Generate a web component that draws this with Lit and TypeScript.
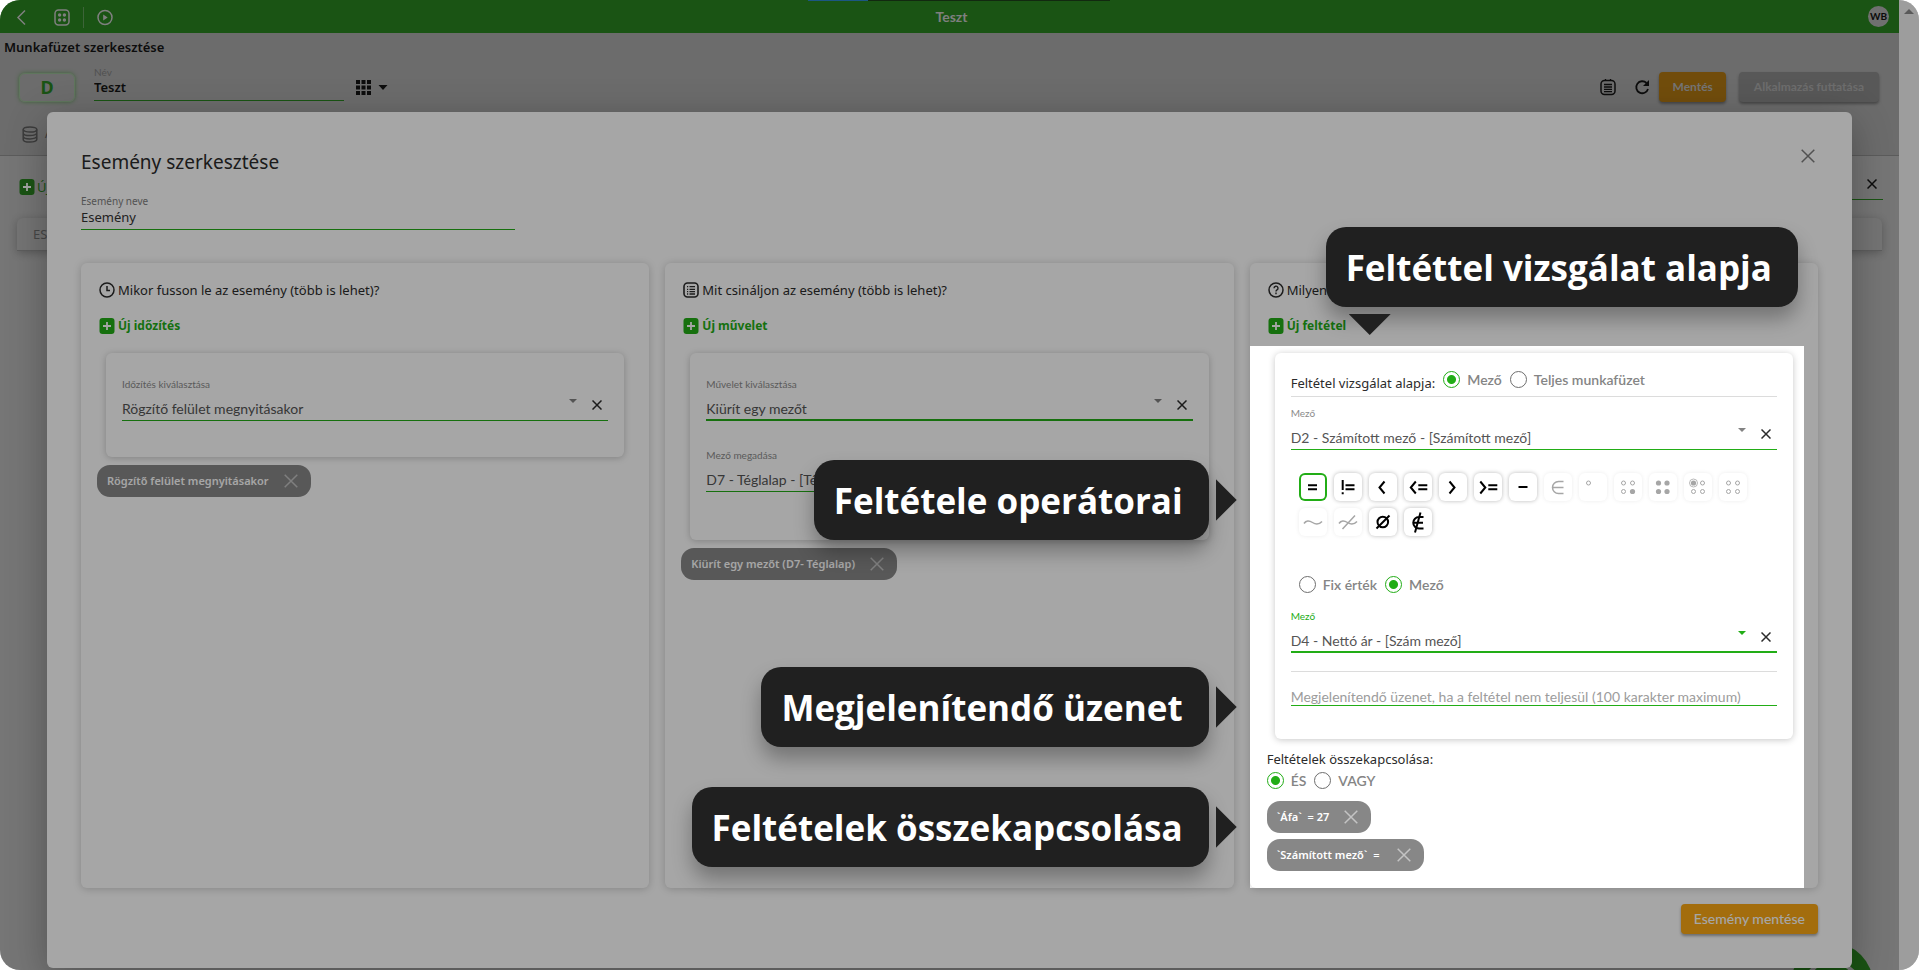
import { LitElement, html, svg, css, TemplateResult, SVGTemplateResult } from "lit";
import { customElement } from "lit/decorators.js";
import { classMap } from "lit/directives/class-map.js";

type Operator = { name: string; glyph: SVGTemplateResult; state?: "active" | "off" };

const ring = (x: number, y: number) =>
  svg`<circle cx=${x} cy=${y} r="2" fill="none" stroke="currentColor" stroke-width="1"/>`;
const dot = (x: number, y: number) => svg`<circle cx=${x} cy=${y} r="2.6" fill="currentColor"/>`;
const stroke = (d: string, width = 2) =>
  svg`<path d=${d} fill="none" stroke="currentColor" stroke-width=${width}/>`;

const OPERATORS: Operator[] = [
  { name: "egyenlő", glyph: stroke("M9 12.2h9M9 16.2h9"), state: "active" },
  { name: "nem egyenlő", glyph: stroke("M8.7 7v10M8.7 19.3v2M11.5 12.2h9M11.5 16.2h9") },
  { name: "kisebb", glyph: stroke("M15.5 8.5l-5 6 5 6") },
  { name: "kisebb vagy egyenlő", glyph: stroke("M11.8 8.5l-5 6 5 6M14.3 12.2h9M14.3 16.2h9") },
  { name: "nagyobb", glyph: stroke("M10.5 8.5l5 6-5 6") },
  { name: "nagyobb vagy egyenlő", glyph: stroke("M6.3 8.5l5 6-5 6M14.3 12.2h9M14.3 16.2h9") },
  { name: "között", glyph: stroke("M9.5 14h9") },
  { name: "eleme", glyph: stroke("M19.5 8.5h-5a5.8 5.8 0 0 0 0 12h5M9 14.5h10.5", 1.5), state: "off" },
  { name: "egy", glyph: ring(9.5, 10), state: "off" },
  { name: "utolsó", glyph: svg`${ring(9.5, 10)}${ring(18.5, 10)}${ring(9.5, 18.5)}${dot(18.5, 18.5)}`, state: "off" },
  { name: "mind", glyph: svg`${dot(9.5, 10)}${dot(18, 10)}${dot(9.5, 18.5)}${dot(18, 18.5)}`, state: "off" },
  {
    name: "első",
    glyph: svg`${dot(9.5, 10)}<circle cx="9.5" cy="10" r="4" fill="none" stroke="currentColor" stroke-width=".8"/>${ring(18.5, 10)}${ring(9.5, 18.5)}${ring(18.5, 18.5)}`,
    state: "off",
  },
  { name: "egyik sem", glyph: svg`${ring(9.5, 10)}${ring(18.5, 10)}${ring(9.5, 18.5)}${ring(18.5, 18.5)}`, state: "off" },
  { name: "hasonló", glyph: stroke("M5 15.5c2-3.2 5-3.4 8.5-1s6.5 2.2 9.5-1", 1.5), state: "off" },
  {
    name: "nem hasonló",
    glyph: stroke("M5 15.5c2-3.2 5-3.4 8.5-1s6.5 2.2 9.5-1M8.5 21L21 7.5", 1.5),
    state: "off",
  },
  {
    name: "üres",
    glyph: svg`<circle cx="13.8" cy="14" r="5.3" fill="none" stroke="currentColor" stroke-width="2"/>${stroke("M7.5 20.5L20.5 7.5")}`,
  },
  { name: "nem eleme", glyph: stroke("M19.5 9h-4.5a5.6 5.6 0 0 0 0 11.5h4.5M10 14.7h9M11 24.5L16.5 4.5") },
];

const plusIcon = html`<svg width="16" height="16" viewBox="0 0 16 16" aria-hidden="true">
  <rect x=".5" y="0" width="15" height="16" rx="3" fill="currentColor" />
  <path d="M8 4v8M4 8h8" stroke="#fff" stroke-width="1.8" />
</svg>`;
const clockIcon = html`<svg width="16" height="16" viewBox="0 0 16 16" fill="none" stroke="currentColor" aria-hidden="true">
  <circle cx="8" cy="8" r="7" stroke-width="1.5" />
  <path d="M8 4v4.5h3" stroke-width="1.5" />
</svg>`;
const listIcon = html`<svg width="16" height="16" viewBox="0 0 16 16" fill="none" stroke="currentColor" aria-hidden="true">
  <rect x="1" y="1" width="14" height="14" rx="3.5" stroke-width="1.6" />
  <path d="M4 4.7h1.2M4 7.3h1.2M4 9.7h1.2M4 12h1.2M6.5 4.7h5.5M6.5 7.3h5.5M6.5 9.7h5.5M6.5 12h5.5" stroke-width="1.3" />
</svg>`;
const questionIcon = html`<svg width="16" height="16" viewBox="0 0 16 16" fill="none" stroke="currentColor" aria-hidden="true">
  <circle cx="8" cy="8" r="7" stroke-width="1.5" />
  <path d="M6 6.2a2 2 0 1 1 3 1.7c-.7.4-1 .8-1 1.6M8 10.6v1.6" stroke-width="1.4" />
</svg>`;
const cross = (size: number, width: number) => html`<svg
  width=${size} height=${size} viewBox="0 0 10 10" aria-hidden="true"
><path d="M.5.5l9 9M9.5.5l-9 9" fill="none" stroke="currentColor" stroke-width=${(width * 10) / size} /></svg>`;

@customElement("app-root")
export class AppRoot extends LitElement {
  static styles = css`
    :host {
      --green: #22ad16;
      --ui: "Noto Sans", "Open Sans", sans-serif;
      --round: Lato, "Open Sans", sans-serif;
      display: block;
      background: #fff;
      font-family: var(--ui);
      font-size: 13px;
      line-height: 20px;
      color: #2b2b2b;
    }
    * { box-sizing: border-box; }
    svg { display: block; flex: none; }
    button {
      display: flex; align-items: center; justify-content: center;
      margin: 0; padding: 0; border: 0; background: none;
      font: inherit; color: inherit; cursor: pointer;
    }
    h1, h2, h3, p { margin: 0; font: inherit; }
    .screen {
      position: relative;
      display: flex;
      min-height: 100vh;
      border-radius: 20px;
      overflow: hidden;
      background: #b5b5b5;
    }
    .page { flex: 1; min-width: 0; position: relative; display: flex; flex-direction: column; }
    .scroll { width: 20px; background: #f1f1f1; color: #8a8a8a; display: flex; justify-content: center; padding-top: 9px; }

    .bar {
      height: 33px; background: #28811f; color: #c4c4c4;
      display: grid; grid-template-columns: 1fr auto 1fr; align-items: center;
      padding: 0 10px 0 14px;
      font-family: var(--round); font-weight: 700; font-size: 14px;
    }
    .bar-left { display: flex; align-items: center; padding-top: 2px; }
    .bar-left button { width: 16px; height: 17px; }
    .bar-left .apps { margin-left: 24px; }
    .rule { width: 1px; height: 21px; margin: 0 13px; background: #5f9a58; }
    .avatar {
      justify-self: end; width: 21px; height: 21px; border-radius: 50%;
      background: #adadad; color: #111; font-size: 10px; line-height: 21px; text-align: center;
    }
    .progress { position: absolute; top: 0; left: 808px; width: 302px; height: 1px; background: linear-gradient(90deg, #2b86c9 20%, #1c3f1a 20%); }

    .head { background: #a6a6a6; border-bottom: 1px solid #8d8d8d; height: 123px; color: #141414; }
    .head h1 { padding: 4px 4px 0; font-size: 13px; line-height: 20px; font-weight: 600; }
    .tools { display: flex; align-items: center; padding: 15px 20px 0 19px; }
    .letter {
      width: 56px; height: 29px; border-radius: 6px; border: 1px solid #93b58f; box-shadow: 0 0 4px #5f9a58;
      color: #28811f; font-size: 18px; font-weight: 700; line-height: 27px; text-align: center;
    }
    .name { width: 250px; height: 36px; margin: -8px 12px 0 19px; display: flex; flex-direction: column; border-bottom: 1px solid #28811f; }
    .name label { font: 10px/14px var(--round); color: #7c7c7c; }
    .name input { height: 16px; font-size: 13px; font-weight: 600; color: #141414; }
    .grid { gap: 7px; }
    .tools .right { margin-left: auto; display: flex; align-items: center; }
    .btn {
      height: 30px; border-radius: 4px; padding: 0 13px; background: #faa814; color: #fff;
      box-shadow: 0 2px 3px rgba(0, 0, 0, .35); white-space: nowrap;
    }
    .tools .btn { background: #ae7612; color: #b3b3b3; font: 700 12px/16px var(--round); }
    .tools .btn.off { background: #878787; color: #a8a8a8; margin-left: 13px; padding: 0 15px; }
    .tab { display: flex; gap: 7px; padding: 24px 22px 0; color: #5c5c5c; font-size: 12px; line-height: 16px; }
    .subhead { display: flex; align-items: center; margin-top: 18px; height: 26px; padding: 0 16px 0 19px; color: #28811f; gap: 2px; }
    .search { margin-left: auto; width: 250px; height: 26px; border-bottom: 1px solid #28811f; color: #141414; display: flex; justify-content: flex-end; align-items: flex-start; padding: 5px 6px 0 0; }
    .thead { margin: 18px 17px 0; height: 33px; border-radius: 6px 6px 0 0; border-bottom: 1px solid #8f8f8f; background: #b3b3b3; color: #6d6d6d; padding: 6px 16px; box-shadow: 0 2px 8px rgba(0, 0, 0, .25); }
    .fab { position: absolute; right: 26px; bottom: -55px; }

    input, select { font-family: inherit; margin: 0; padding: 0; border: 0; outline: 0; background: none; border-radius: 0; min-width: 0; }

    .modal {
      position: absolute; inset: 112px 47px 2px 47px;
      display: flex; flex-direction: column;
      padding: 0 34px 34px;
      background: #fff; border-radius: 6px;
      box-shadow: 0 10px 40px rgba(0, 0, 0, .3);
    }
    .modal-head { display: flex; align-items: flex-start; justify-content: space-between; padding-top: 36px; }
    .modal-head h2 { font-size: 19px; line-height: 28px; }
    .modal-head button { width: 16px; height: 16px; margin-right: 2px; color: #7d7d7d; }
    .event { width: 434px; height: 36px; margin-top: 18px; display: flex; flex-direction: column; border-bottom: 1px solid var(--green); }
    .event label { font-size: 10px; line-height: 14px; color: #808080; }
    .event input { height: 17px; font-size: 13px; color: #333; }
    .columns { flex: 1; display: grid; grid-template-columns: repeat(3, minmax(0, 1fr)); gap: 16px; margin-top: 33px; }
    .column { position: relative; border-radius: 6px; box-shadow: 0 1px 8px rgba(0, 0, 0, .2); padding: 17px 16px 0; }
    .question, .add { display: flex; align-items: center; gap: 3px; padding-left: 2px; height: 20px; white-space: nowrap; }
    .add { margin-top: 16px; color: var(--green); font-weight: 700; font-size: 12px; }
    .card { margin: 17px 9px 8px; padding: 24px 16px 36px; border-radius: 6px; box-shadow: 0 1px 7px rgba(0, 0, 0, .22); }
    .card.tall { padding-bottom: 48px; }
    .card.rules { padding: 15px 16px 33px; margin-bottom: 10px; }

    .field { font-family: var(--round); }
    .field label { display: block; font-size: 10px; line-height: 14px; color: #8c8c8c; }
    .field .line { display: flex; align-items: center; height: 28px; margin-top: 2px; border-bottom: 1px solid var(--green); }
    .field.thick .line { border-bottom-width: 2px; }
    .field select { appearance: none; flex: 1; height: 24px; margin-top: 4px; font-size: 14px; color: #555; text-overflow: ellipsis; }
    .caret { align-self: flex-start; color: #828282; pointer-events: none; }
    .field .clear { width: 20px; height: 24px; align-self: flex-start; margin: 0 1px 0 6px; color: #2b2b2b; }
    .field.focus label, .field.focus .caret { color: var(--green); }
    .field + .field { margin-top: 27px; }

    .chip {
      display: flex; align-items: center; width: fit-content; height: 32px; padding: 0 13px 0 10px; gap: 15px;
      border-radius: 13px; background: #878787; color: #fff; font-size: 11px; font-weight: 600; white-space: pre;
    }
    .chip button { color: #c4c4c4; }
    .chip + .chip { margin-top: 6px; }

    .radios { display: flex; align-items: center; font: 600 14px/17px var(--round); color: #858585; }
    .radios label { padding-left: 7px; }
    .radios input {
      appearance: none; width: 17px; height: 17px; border: 1px solid #6e6e6e; border-radius: 50%;
    }
    .radios label + input { margin-left: 8px; }
    .radios input:checked { border-color: var(--green); background: radial-gradient(circle, var(--green) 4px, transparent 5px); }
    .basis { display: flex; align-items: center; gap: 8px; height: 29px; border-bottom: 1px solid #dcdcdc; margin-bottom: 9px; white-space: nowrap; }
    .basis span { padding-top: 2px; }
    .basis .radios { padding-bottom: 5px; }
    .ops { display: flex; flex-wrap: wrap; gap: 7px; margin: 23px 0 40px 8px; }
    .ops button { width: 28px; height: 28px; border-radius: 6px; color: #000; box-shadow: 0 0 4px rgba(0, 0, 0, .28); }
    .ops .active { box-shadow: inset 0 0 0 2px var(--green); }
    .ops .off { color: #a6a6a6; box-shadow: 0 0 4px rgba(0, 0, 0, .08); }
    .source { margin: 0 0 16px 8px; }
    .message { margin-top: 18px; border-top: 1px solid #dcdcdc; padding-top: 16px; }
    .message input { display: block; width: 100%; height: 18px; border-bottom: 1px solid var(--green); font: 14px/17px var(--round); color: #333; }
    .message input::placeholder { color: #9c9c9c; opacity: 1; }
    .join { padding-left: 1px; }
    .joiners { margin: 3px 0 12px 1px; }
    .rules-chips { margin-left: 1px; }
    .save { margin: 16px 0 0 auto; font: 500 14px/20px var(--round); }

    .spot { position: absolute; inset: 83px 14px 0 0; z-index: 1; pointer-events: none; box-shadow: 0 0 0 3000px rgba(0, 0, 0, .35); }
    .callout {
      position: absolute; z-index: 2; height: 80px; padding: 0 26px 0 20px; border-radius: 20px;
      background: #202020; color: #fff; font: 700 35px/82px "Open Sans", sans-serif; white-space: nowrap;
      box-shadow: 0 12px 20px rgba(0, 0, 0, .3);
    }
    .callout::after { content: ""; position: absolute; background: #202020; }
    .callout.left { right: calc(100% + 41px); }
    .callout.left::after { left: calc(100% + 7px); top: 19px; width: 21px; height: 42px; clip-path: polygon(0 0, 100% 50%, 0 100%); }
    .callout.above { left: 76px; top: -36px; }
    .callout.above::after { left: 23px; top: 87px; width: 42px; height: 21px; clip-path: polygon(0 0, 100% 0, 50% 100%); }
    .at-ops { top: 197px; }
    .at-message { top: 404px; }
    .at-join { top: 524px; }
  `;

  private select(id: string, label: string, value: string, kind = ""): TemplateResult {
    return html`<div class="field ${kind}">
      <label for=${id}>${label}</label>
      <div class="line">
        <select id=${id}><option>${value}</option></select>
        <svg class="caret" width="16" height="16" viewBox="0 0 16 16" aria-hidden="true"><path d="M4 6h8l-4 4z" fill="currentColor" /></svg>
        <button class="clear" aria-label="Törlés">${cross(10, 1.5)}</button>
      </div>
    </div>`;
  }

  private chip(text: string): TemplateResult {
    return html`<div class="chip"><span>${text}</span><button aria-label="Eltávolítás">${cross(14, 1.5)}</button></div>`;
  }

  private radios(name: string, options: string[], checked: number, kind = ""): TemplateResult {
    return html`<div class="radios ${kind}" role="radiogroup">
      ${options.map(
        (o, i) => html`<input type="radio" id="${name}${i}" name=${name} ?checked=${i === checked} /><label for="${name}${i}">${o}</label>`
      )}
    </div>`;
  }

  private page(): TemplateResult {
    return html`
      <header class="bar">
        <div class="bar-left">
          <button aria-label="Vissza"><svg width="16" height="17" viewBox="0 0 16 17"><path d="M11 1.5L4 8.5l7 7" fill="none" stroke="currentColor" stroke-width="1.5" /></svg></button>
          <button class="apps" aria-label="Alkalmazások"><svg width="16" height="17" viewBox="0 0 16 17" fill="none" stroke="currentColor"><rect x="1" y="1" width="14" height="15" rx="3.5" stroke-width="1.5" /><g fill="currentColor" stroke="none"><circle cx="5.6" cy="6" r="1.7" /><circle cx="10.4" cy="6" r="1.7" /><circle cx="5.6" cy="11" r="1.7" /><circle cx="10.4" cy="11" r="1.7" /></g></svg></button>
          <span class="rule"></span>
          <button aria-label="Indítás"><svg width="16" height="17" viewBox="0 0 16 17" fill="none" stroke="currentColor"><circle cx="8" cy="8.5" r="7" stroke-width="1.5" /><path d="M6.2 5.5v6l4.5-3z" fill="currentColor" stroke="none" /></svg></button>
        </div>
        <span>Teszt</span>
        <span class="avatar">WB</span>
      </header>
      <div class="progress"></div>
      <section class="head">
        <h1>Munkafüzet szerkesztése</h1>
        <div class="tools">
          <div class="letter">D</div>
          <div class="name"><label for="wb">Név</label><input id="wb" .value=${"Teszt"} /></div>
          <button class="grid" aria-label="Nézet">
            <svg width="15" height="15" viewBox="0 0 15 15" fill="currentColor">${[0, 5.5, 11].map((y) => [0, 5.5, 11].map((x) => svg`<rect x=${x} y=${y} width="4" height="4" />`))}</svg>
            <svg width="10" height="5" viewBox="0 0 10 5"><path d="M.5 0h9L5 5z" fill="currentColor" /></svg>
          </button>
          <div class="right">
            <button aria-label="Napló"><svg width="18" height="18" viewBox="0 0 18 18" fill="none" stroke="currentColor"><rect x="2" y="2.5" width="14" height="14" rx="3.5" stroke-width="1.5" /><path d="M6.5 1v2M11.5 1v2M5 6.5h8M5 9h8M5 11.3h8M5 13.6h8" stroke-width="1.3" /></svg></button>
            <button aria-label="Frissítés"><svg width="42" height="18" viewBox="0 0 42 18" fill="none" stroke="currentColor"><path d="M29.5 5A6 6 0 1 0 31 11" stroke-width="1.8" /><path d="M32 2v6h-6z" fill="currentColor" stroke="none" /></svg></button>
            <button class="btn">Mentés</button>
            <button class="btn off">Alkalmazás futtatása</button>
          </div>
        </div>
        <div class="tab">
          <svg width="16" height="17" viewBox="0 0 16 17" fill="none" stroke="currentColor" stroke-width="1.5"><ellipse cx="8" cy="3.5" rx="6.8" ry="2.6" /><path d="M1.2 3.5v10c0 1.5 3 2.6 6.8 2.6s6.8-1.1 6.8-2.6v-10M1.2 7c0 1.5 3 2.6 6.8 2.6s6.8-1.1 6.8-2.6M1.2 10.3c0 1.5 3 2.6 6.8 2.6s6.8-1.1 6.8-2.6" /></svg>
          <span>A</span>
        </div>
      </section>
      <div class="subhead">${plusIcon}<span>Új</span><div class="search">${cross(10, 1.5)}</div></div>
      <div class="thead">ES</div>
      <svg class="fab" width="82" height="82" viewBox="0 0 82 82"><circle cx="41" cy="41" r="41" fill="#28811f" /><path d="M14 34L26 22M52 20l12 10" stroke="#b5b5b5" stroke-width="4" /></svg>
    `;
  }

  render() {
    return html`<div class="screen">
      <main class="page">
        ${this.page()}
        <section class="modal" role="dialog" aria-labelledby="dlg">
          <div class="modal-head"><h2 id="dlg">Esemény szerkesztése</h2><button aria-label="Bezárás">${cross(14, 1.5)}</button></div>
          <div class="event"><label for="ev">Esemény neve</label><input id="ev" .value=${"Esemény"} /></div>
          <div class="columns">
            <section class="column">
              <h3 class="question">${clockIcon}Mikor fusson le az esemény (több is lehet)?</h3>
              <button class="add">${plusIcon}Új időzítés</button>
              <div class="card">${this.select("timing", "Időzítés kiválasztása", "Rögzítő felület megnyitásakor")}</div>
              ${this.chip("Rögzítő felület megnyitásakor")}
            </section>
            <section class="column">
              <h3 class="question">${listIcon}Mit csináljon az esemény (több is lehet)?</h3>
              <button class="add">${plusIcon}Új művelet</button>
              <div class="card tall">
                ${this.select("action", "Művelet kiválasztása", "Kiürít egy mezőt", "thick")}
                ${this.select("target", "Mező megadása", "D7 - Téglalap - [Téglalap]")}
              </div>
              ${this.chip("Kiürít egy mezőt (D7- Téglalap)")}
            </section>
            <section class="column">
              <h3 class="question">${questionIcon}Milyen</h3>
              <button class="add">${plusIcon}Új feltétel</button>
              <div class="card rules">
                <div class="basis"><span>Feltétel vizsgálat alapja:</span>${this.radios("basis", ["Mező", "Teljes munkafüzet"], 0)}</div>
                ${this.select("field", "Mező", "D2 - Számított mező - [Számított mező]")}
                <div class="ops">
                  ${OPERATORS.map(
                    (o) => html`<button class=${classMap({ active: o.state === "active", off: o.state === "off" })} aria-label=${o.name}><svg width="28" height="28" viewBox="0 0 28 28">${o.glyph}</svg></button>`
                  )}
                </div>
                ${this.radios("source", ["Fix érték", "Mező"], 1, "source")}
                ${this.select("other", "Mező", "D4 - Nettó ár - [Szám mező]", "thick focus")}
                <div class="message"><input aria-label="Üzenet" placeholder="Megjelenítendő üzenet, ha a feltétel nem teljesül (100 karakter maximum)" /></div>
              </div>
              <p class="join">Feltételek összekapcsolása:</p>
              ${this.radios("join", ["ÉS", "VAGY"], 0, "joiners")}
              <div class="rules-chips">${this.chip("`Áfa`  = 27")}${this.chip("`Számított mező`  = ")}</div>
              <div class="spot"></div>
              <div class="callout above">Feltéttel vizsgálat alapja</div>
              <div class="callout left at-ops">Feltétele operátorai</div>
              <div class="callout left at-message">Megjelenítendő üzenet</div>
              <div class="callout left at-join">Feltételek összekapcsolása</div>
            </section>
          </div>
          <button class="btn save">Esemény mentése</button>
        </section>
      </main>
      <div class="scroll"><svg width="10" height="5" viewBox="0 0 10 5"><path d="M0 5h10L5 0z" fill="currentColor" /></svg></div>
    </div>`;
  }
}
